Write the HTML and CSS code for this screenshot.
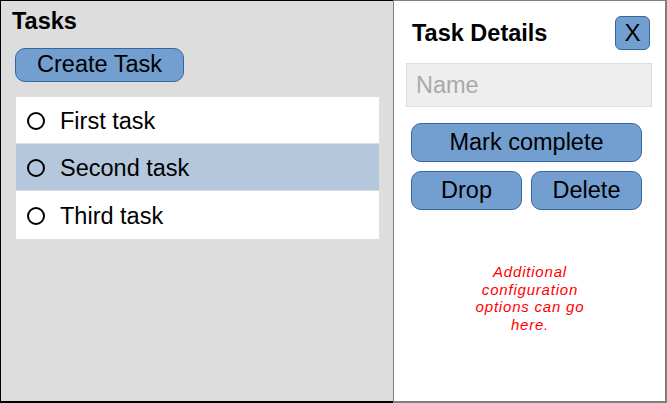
FILE: index.html
```html
<!DOCTYPE html>
<html>
<head>
<meta charset="utf-8">
<link rel="stylesheet" href="styles.css">
</head>
<body>
<div class="app">
  <section class="tasks">
    <h1 class="tasks-title">Tasks</h1>
    <button class="btn btn-create">Create Task</button>
    <ul class="task-list">
      <li class="task"><span class="radio"></span><span class="task-name">First task</span></li>
      <li class="task selected"><span class="radio"></span><span class="task-name">Second task</span></li>
      <li class="task"><span class="radio"></span><span class="task-name">Third task</span></li>
    </ul>
  </section>
  <aside class="details">
    <div class="details-head">
      <h2 class="details-title">Task Details</h2>
      <button class="btn btn-close">X</button>
    </div>
    <input class="name-input" type="text" placeholder="Name">
    <div class="actions">
      <button class="btn btn-wide">Mark complete</button>
      <div class="action-row">
        <button class="btn btn-half">Drop</button>
        <button class="btn btn-half">Delete</button>
      </div>
    </div>
    <p class="note">Additional<br>configuration<br>options can go<br>here.</p>
  </aside>
</div>
</body>
</html>
```

FILE: styles.css
```css
* { box-sizing: border-box; }
html, body { margin: 0; padding: 0; }
body {
  font-family: "Liberation Sans", Arial, sans-serif;
  color: #000;
  background: #fff;
}
.app {
  display: flex;
  width: 667px;
  height: 403px;
}
.tasks {
  flex: none;
  width: 393px;
  height: 403px;
  background: #dddddd;
  border-left: 1px solid #000;
  border-top: 1px solid #000;
  border-bottom: 2px solid #000;
  padding: 0 13px 0 14px;
  display: flex;
  flex-direction: column;
  align-items: flex-start;
}
.tasks-title {
  margin: 6px 0 0 -3px;
  font-size: 23.5px;
  font-weight: bold;
  line-height: 28px;
}
.btn {
  font-family: "Liberation Sans", Arial, sans-serif;
  font-size: 23.5px;
  color: #000;
  background: #729fcf;
  border: 1px solid #3465a4;
  border-radius: 10px;
  padding: 0;
  line-height: 1;
}
.btn-create {
  margin-top: 13px;
  width: 169px;
  height: 34px;
}
.task-list {
  list-style: none;
  margin: 15px 0 0 1px;
  padding: 0;
  width: 363px;
  background: #fff;
}
.task {
  height: 47px;
  display: flex;
  align-items: center;
  padding-left: 11px;
  padding-top: 2px;
  font-size: 23.5px;
  border-bottom: 1px solid #dddddd;
}
.task:last-child { border-bottom: none; height: 48px; }
.task.selected { background: #b4c7dc; }
.radio {
  width: 18px;
  height: 18px;
  border: 2px solid #000;
  border-radius: 50%;
  margin-right: 15px;
  flex: none;
}
.details {
  flex: 1;
  min-width: 0;
  height: 403px;
  border: 1px solid #808080;
  border-bottom-width: 2px;
  border-right-width: 2px;
  padding: 15px 13px 0 12px;
  display: flex;
  flex-direction: column;
}
.details-head {
  display: flex;
  align-items: center;
  justify-content: space-between;
  padding-left: 6px;
  padding-right: 2px;
}
.details-title {
  margin: 0;
  font-size: 23.5px;
  font-weight: bold;
}
.btn-close {
  width: 35px;
  height: 34px;
  border-radius: 6px;
  font-size: 24px;
}
.name-input {
  margin-top: 13px;
  width: 246px;
  height: 44px;
  background: #eeeeee;
  border: 1px solid #dddddd;
  font-family: "Liberation Sans", Arial, sans-serif;
  font-size: 23.5px;
  padding: 0 9px;
  outline: none;
}
.name-input::placeholder { color: #aaaaaa; }
.actions {
  margin-top: 16px;
  padding-left: 5px;
  display: flex;
  flex-direction: column;
  gap: 9px;
  width: 236px;
}
.btn-wide {
  width: 231px;
  height: 39px;
}
.action-row {
  display: flex;
  gap: 9px;
}
.btn-half {
  width: 111px;
  height: 39px;
}
.note {
  margin: 53px 0 0 0;
  text-align: center;
  color: #ff0000;
  font-style: italic;
  font-size: 15px;
  letter-spacing: 0.8px;
  line-height: 17.5px;
  padding-left: 2px;
}
```
